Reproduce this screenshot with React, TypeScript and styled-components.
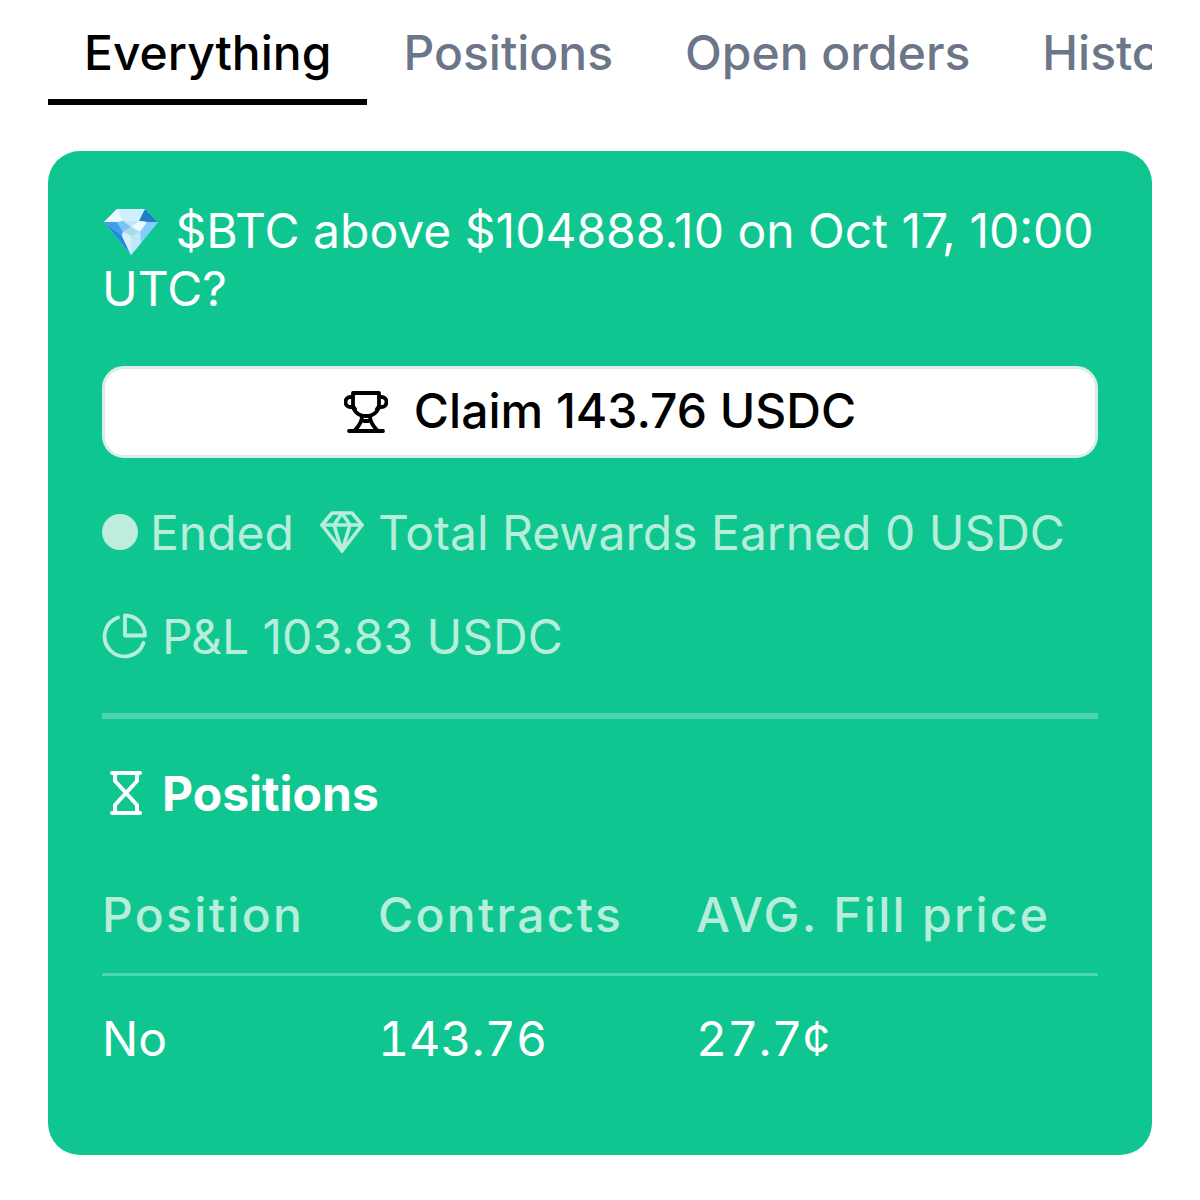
import React from "react";
import styled, { createGlobalStyle } from "styled-components";

const GlobalStyle = createGlobalStyle`
  html, body {
    margin: 0;
    background: #fff;
    font-family: Inter, "Liberation Sans", sans-serif;
  }
`;

const tabs = ["Everything", "Positions", "Open orders", "History"];

const rows = [{ position: "No", contracts: "143.76", price: "27.7¢" }];

function GemEmoji() {
  return (
    <svg width="56" height="48" viewBox="0 0 56 48">
      <path d="M14 1h28l13 13L28 47 1 14z" fill="#bfe6fb" />
      <path d="M14 1h28l-6 12H20z" fill="#d3effd" />
      <path d="M42 1l13 13H44l-8-1z" fill="#1c80c9" />
      <path d="M14 1L1 14h13l6-1z" fill="#eaf8ff" />
      <path d="M1 14h13l6 9-1 5z" fill="#3f9fe6" />
      <path d="M1 14l27 33-9-19z" fill="#1f88e0" />
      <path d="M14 14l6-1 8 6-8 5z" fill="#7cc4f4" />
      <path d="M36 13l8 1-7 10-9-5z" fill="#eef9ff" />
      <path d="M44 14h11L38 35l-1-11z" fill="#84cdf7" />
      <path d="M20 24l8-5 9 5-9 4z" fill="#a9dbe9" />
      <path d="M20 24l8 4v19l-9-19z" fill="#d5f0fd" />
      <path d="M37 24l-9 4v19l10-12z" fill="#bfe6fb" />
    </svg>
  );
}

function TrophyIcon() {
  return (
    <svg width="44" height="44" viewBox="0 0 44 44" fill="none" stroke="#000" strokeWidth="3.8" strokeLinejoin="round" strokeLinecap="round">
      <path d="M9 3h26v11c0 7-5 12-13 12S9 21 9 14z" />
      <path d="M9 7H6.500a4.500 4.500 0 0 0 0 10c2 0 3.500.5 4.500 2" />
      <path d="M35 7h2.500a4.500 4.500 0 0 1 0 10c-2 0-3.500.5-4.500 2" />
      <path d="M18 26c0 4-2 9-7 14M26 26c0 4 2 9 7 14M20 31h4" />
      <path d="M5 41h34" />
    </svg>
  );
}

function GemOutlineIcon() {
  return (
    <svg width="44" height="42" viewBox="0 0 44 42" fill="none" stroke="#b7eedb" strokeWidth="3.600" strokeLinejoin="round" strokeLinecap="round">
      <path d="M12 2h20l10 12-20 26L2 14z" />
      <path d="M2 14h40M14 14l8 26 8-26M14 14l8-12 8 12" />
    </svg>
  );
}

function PieIcon() {
  return (
    <svg width="46" height="46" viewBox="0 0 46 46" fill="none" stroke="#b7eedb" strokeWidth="3.800" strokeLinejoin="round" strokeLinecap="round">
      <path d="M16 4.500A20 20 0 1 0 41.500 30" />
      <path d="M23 2.500a20 20 0 0 1 20 20H23z" />
    </svg>
  );
}

function HourglassIcon() {
  return (
    <svg width="32" height="44" viewBox="0 0 32 44" fill="none" stroke="#fff" strokeWidth="4" strokeLinejoin="round" strokeLinecap="round">
      <path d="M2 2h28M2 42h28" />
      <path d="M5 2v8l22 24v8M27 2v8L5 34v8" />
    </svg>
  );
}

export default function App() {
  return (
    <Page>
      <GlobalStyle />
      <TabBar>
        {tabs.map((tab, i) => (
          <Tab key={tab} $active={i === 0}>
            {tab}
          </Tab>
        ))}
      </TabBar>
      <Card>
        <Title>
          <GemEmoji /> $BTC above $104888.10 on Oct 17, 10:00 UTC?
        </Title>
        <ClaimButton>
          <TrophyIcon />
          <ClaimLabel>Claim 143.76 USDC</ClaimLabel>
        </ClaimButton>
        <MetaRow>
          <MetaItem $gap={12}>
            <Dot />
            Ended
          </MetaItem>
          <MetaItem $gap={14}>
            <GemOutlineIcon />
            Total Rewards Earned 0 USDC
          </MetaItem>
        </MetaRow>
        <MetaRow>
          <MetaItem $gap={14}>
            <PieIcon />
            P&amp;L 103.83 USDC
          </MetaItem>
        </MetaRow>
        <Divider />
        <SectionTitle>
          <HourglassIcon />
          Positions
        </SectionTitle>
        <TableHead>
          <span>Position</span>
          <span>Contracts</span>
          <span>AVG. Fill price</span>
        </TableHead>
        {rows.map((row) => (
          <TableRow key={row.position}>
            <span>{row.position}</span>
            <span>{row.contracts}</span>
            <span>{row.price}</span>
          </TableRow>
        ))}
      </Card>
    </Page>
  );
}

const Page = styled.div`
  width: 1200px;
  height: 1200px;
  padding: 0 48px;
  box-sizing: border-box;
  overflow: hidden;
`;

const TabBar = styled.div`
  display: flex;
  height: 105px;
  overflow: hidden;
  margin-bottom: 46px;
`;

const Tab = styled.div<{ $active?: boolean }>`
  flex: none;
  padding: 0 36px;
  height: 105px;
  line-height: 105px;
  box-sizing: border-box;
  font-size: 48px;
  font-weight: 500;
  color: ${(p) => (p.$active ? "#000" : "#6b7689")};
  border-bottom: 6px solid ${(p) => (p.$active ? "#000" : "transparent")};
`;

const Card = styled.div`
  height: 1004px;
  box-sizing: border-box;
  background: #10c690;
  border-radius: 32px;
  padding: 51px 54px 0;
  color: #fff;
`;

const Title = styled.div`
  font-size: 48px;
  line-height: 58px;
  margin-bottom: 48px;
  color: #fff;
  svg {
    vertical-align: -8px;
    margin-left: 1px;
    margin-right: 3px;
  }
`;

const ClaimButton = styled.div`
  height: 92px;
  box-sizing: border-box;
  background: #fff;
  border: 3px solid #d9eee7;
  border-radius: 22px;
  display: flex;
  align-items: center;
  justify-content: center;
  gap: 26px;
  font-size: 48px;
  font-weight: 500;
  color: #000;
`;

const ClaimLabel = styled.span`
  margin-bottom: 3px;
`;

const MetaRow = styled.div`
  display: flex;
  align-items: center;
  gap: 26px;
  height: 56px;
  margin-top: 46px;
  & + & {
    margin-top: 48px;
  }
`;

const MetaItem = styled.div<{ $gap: number }>`
  display: flex;
  align-items: center;
  gap: ${(p) => p.$gap}px;
  font-size: 48px;
  color: #b7eedb;
  white-space: nowrap;
`;

const Dot = styled.span`
  width: 36px;
  height: 36px;
  border-radius: 50%;
  background: #bdeedd;
`;

const Divider = styled.div`
  height: 6px;
  margin-top: 49px;
  background: #4dd4ac;
`;

const SectionTitle = styled.div`
  display: flex;
  align-items: center;
  gap: 20px;
  margin-top: 46px;
  padding-left: 8px;
  font-size: 48px;
  font-weight: 700;
  height: 56px;
`;

const tableColumns = "276px 318px 1fr";

const TableHead = styled.div`
  display: grid;
  grid-template-columns: ${tableColumns};
  margin-top: 64px;
  padding-bottom: 29px;
  font-size: 48px;
  font-weight: 500;
  letter-spacing: 2.3px;
  color: #b7eedb;
  border-bottom: 3px solid #4dd4ac;
`;

const TableRow = styled.div`
  display: grid;
  grid-template-columns: ${tableColumns};
  margin-top: 33px;
  font-size: 48px;
  letter-spacing: 0.1px;
  font-variant-numeric: tabular-nums;
  color: #fff;
`;
